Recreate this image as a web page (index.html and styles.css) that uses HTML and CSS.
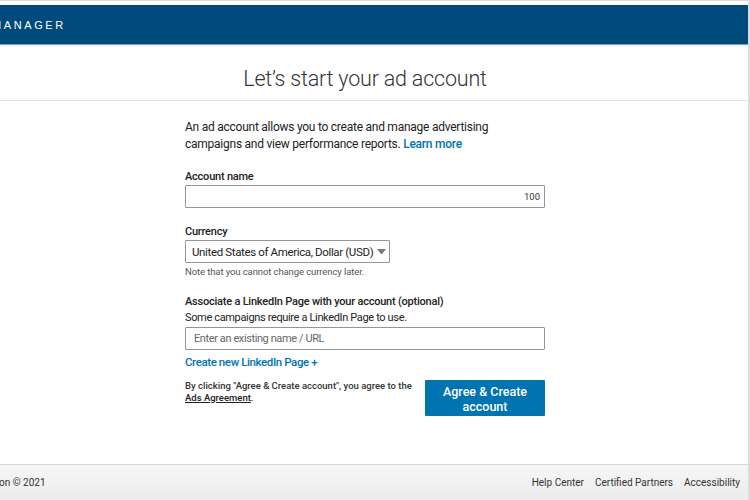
FILE: index.html
```html
<!DOCTYPE html>
<html>
<head>
<meta charset="utf-8">
<link rel="stylesheet" href="styles.css">
</head>
<body>
<div class="frame">
  <div class="topgap"></div>
  <header class="topbar">
    <span class="brand">MANAGER</span>
  </header>
  <div class="title-band">
    <h1 class="title">Let’s start your ad account</h1>
  </div>
  <main class="main">
    <div class="form">
      <p class="intro">An ad account allows you to create and manage advertising campaigns and view performance reports. <a class="link" href="#">Learn more</a></p>

      <label class="label label-first">Account name</label>
      <div class="input input-name"><span class="counter">100</span></div>

      <label class="label label-currency">Currency</label>
      <div class="select">
        <span class="select-text">United States of America, Dollar (USD)</span>
        <svg class="caret" width="9" height="6" viewBox="0 0 9 6"><path d="M0 0 L9 0 L4.5 5.5 Z" fill="#777"/></svg>
      </div>
      <p class="note">Note that you cannot change currency later.</p>

      <label class="label label-page">Associate a LinkedIn Page with your account (optional)</label>
      <p class="help">Some campaigns require a LinkedIn Page to use.</p>
      <div class="input input-page"><span class="placeholder">Enter an existing name / URL</span></div>
      <a class="link create" href="#">Create new LinkedIn Page +</a>

      <div class="actions">
        <p class="terms">By clicking "Agree &amp; Create account", you agree to the <a class="terms-link" href="#">Ads Agreement</a>.</p>
        <button class="btn">Agree &amp; Create account</button>
      </div>
    </div>
  </main>
  <footer class="footer">
    <span class="copy">on © 2021</span>
    <nav class="footer-links">
      <a href="#">Help Center</a>
      <a href="#">Certified Partners</a>
      <a href="#">Accessibility</a>
    </nav>
  </footer>
</div>
</body>
</html>
```
FILE: styles.css
```css
* { box-sizing: border-box; }
html, body { margin: 0; padding: 0; }
body {
  width: 750px;
  height: 500px;
  overflow: hidden;
  background: #fff;
  font-family: Roboto, "Liberation Sans", Arial, sans-serif;
  color: #222;
}
.frame {
  width: 750px;
  height: 500px;
  border-top: 1px solid #dcdcdc;
  border-right: 2px solid #dcdcdc;
  display: flex;
  flex-direction: column;
  overflow: hidden;
}
.topgap { height: 4px; background: #fff; flex: none; }
.topbar {
  height: 40px;
  flex: none;
  background: #004b7c;
  border-bottom: 1px solid #7f9fba;
  display: flex;
  align-items: center;
  overflow: hidden;
  box-shadow: 0 1px 2px rgba(0,0,0,0.08);
}
.brand {
  color: #fff;
  font-family: "Liberation Sans", Arial, sans-serif;
  font-size: 11px;
  letter-spacing: 2.6px;
  margin-left: -8px;
  margin-top: 1px;
  white-space: nowrap;
}
.title-band {
  height: 56px;
  flex: none;
  border-bottom: 1px solid #e2e2e2;
  display: flex;
  align-items: center;
  justify-content: center;
  padding-right: 18px;
  padding-top: 12px;
}
.title {
  margin: 0;
  font-family: Roboto, "Liberation Sans", sans-serif;
  font-weight: 300;
  font-size: 21.5px;
  color: #333;
  letter-spacing: -0.2px;
}
.main {
  flex: 1;
  padding-left: 185px;
}
.form { width: 360px; display: flex; flex-direction: column; align-items: flex-start; }
.intro {
  margin: 18px 0 0;
  font-size: 12px;
  letter-spacing: -0.25px;
  line-height: 17px;
  color: #222;
}
.link {
  color: #0073b1;
  font-weight: 500;
  text-decoration: none;
}
.label {
  display: block;
  font-size: 11px;
  letter-spacing: -0.22px;
  font-weight: 500;
  color: #222;
  line-height: 14px;
}
.label-first { margin-top: 17px; }
.input {
  width: 360px;
  height: 23px;
  border: 1px solid #959595;
  border-radius: 1px;
  margin-top: 2px;
  display: flex;
  align-items: center;
  padding: 0 4px 0 8px;
}
.input-name { margin-top: 1px; justify-content: flex-end; }
.counter { font-size: 9.5px; color: #333; }
.label-currency { margin-top: 17px; }
.select {
  margin-top: 1px;
  width: 205px;
  height: 23px;
  border: 1px solid #959595;
  border-radius: 1px;
  display: flex;
  align-items: center;
  padding: 0 6px;
  font-size: 11.5px;
  letter-spacing: -0.36px;
  color: #222;
  gap: 4px;
  white-space: nowrap;
}
.caret { flex: none; }
.note {
  margin: 3px 0 0;
  font-size: 9.5px;
  letter-spacing: -0.1px;
  color: #555;
  line-height: 12px;
}
.label-page { margin-top: 17px; }
.help {
  margin: 2px 0 0;
  font-size: 11px;
  letter-spacing: -0.35px;
  color: #222;
  line-height: 14px;
}
.input-page { margin-top: 2px; }
.placeholder { font-size: 11px; letter-spacing: -0.4px; color: #666; }
.create { margin-top: 5px; font-size: 11.5px; letter-spacing: -0.4px; line-height: 14px; }
.actions {
  margin-top: 11px;
  width: 360px;
  display: flex;
  justify-content: space-between;
  align-items: flex-start;
}
.terms {
  margin: 0;
  width: 235px;
  font-size: 9.5px;
  line-height: 11.5px;
  font-weight: 500;
  color: #333;
}
.terms-link { color: #222; text-decoration: underline; }
.btn {
  width: 120px;
  height: 36px;
  border: none;
  border-radius: 1px;
  background: #0073b1;
  color: #fff;
  font-family: Roboto, "Liberation Sans", Arial, sans-serif;
  font-weight: 500;
  font-size: 12.5px;
  line-height: 15px;
  padding: 2px 12px 0;
  margin-top: 0;
}
.footer {
  height: 36px;
  flex: none;
  border-top: 1px solid #d6d6d6;
  background: linear-gradient(#f6f6f6, #ececec);
  display: flex;
  align-items: center;
  justify-content: space-between;
  padding: 0 8px 0 0;
  font-size: 10px;
  color: #333;
}
.copy { margin-left: -1px; }
.footer-links { display: flex; gap: 11px; }
.footer-links a { color: #333; text-decoration: none; }
```
